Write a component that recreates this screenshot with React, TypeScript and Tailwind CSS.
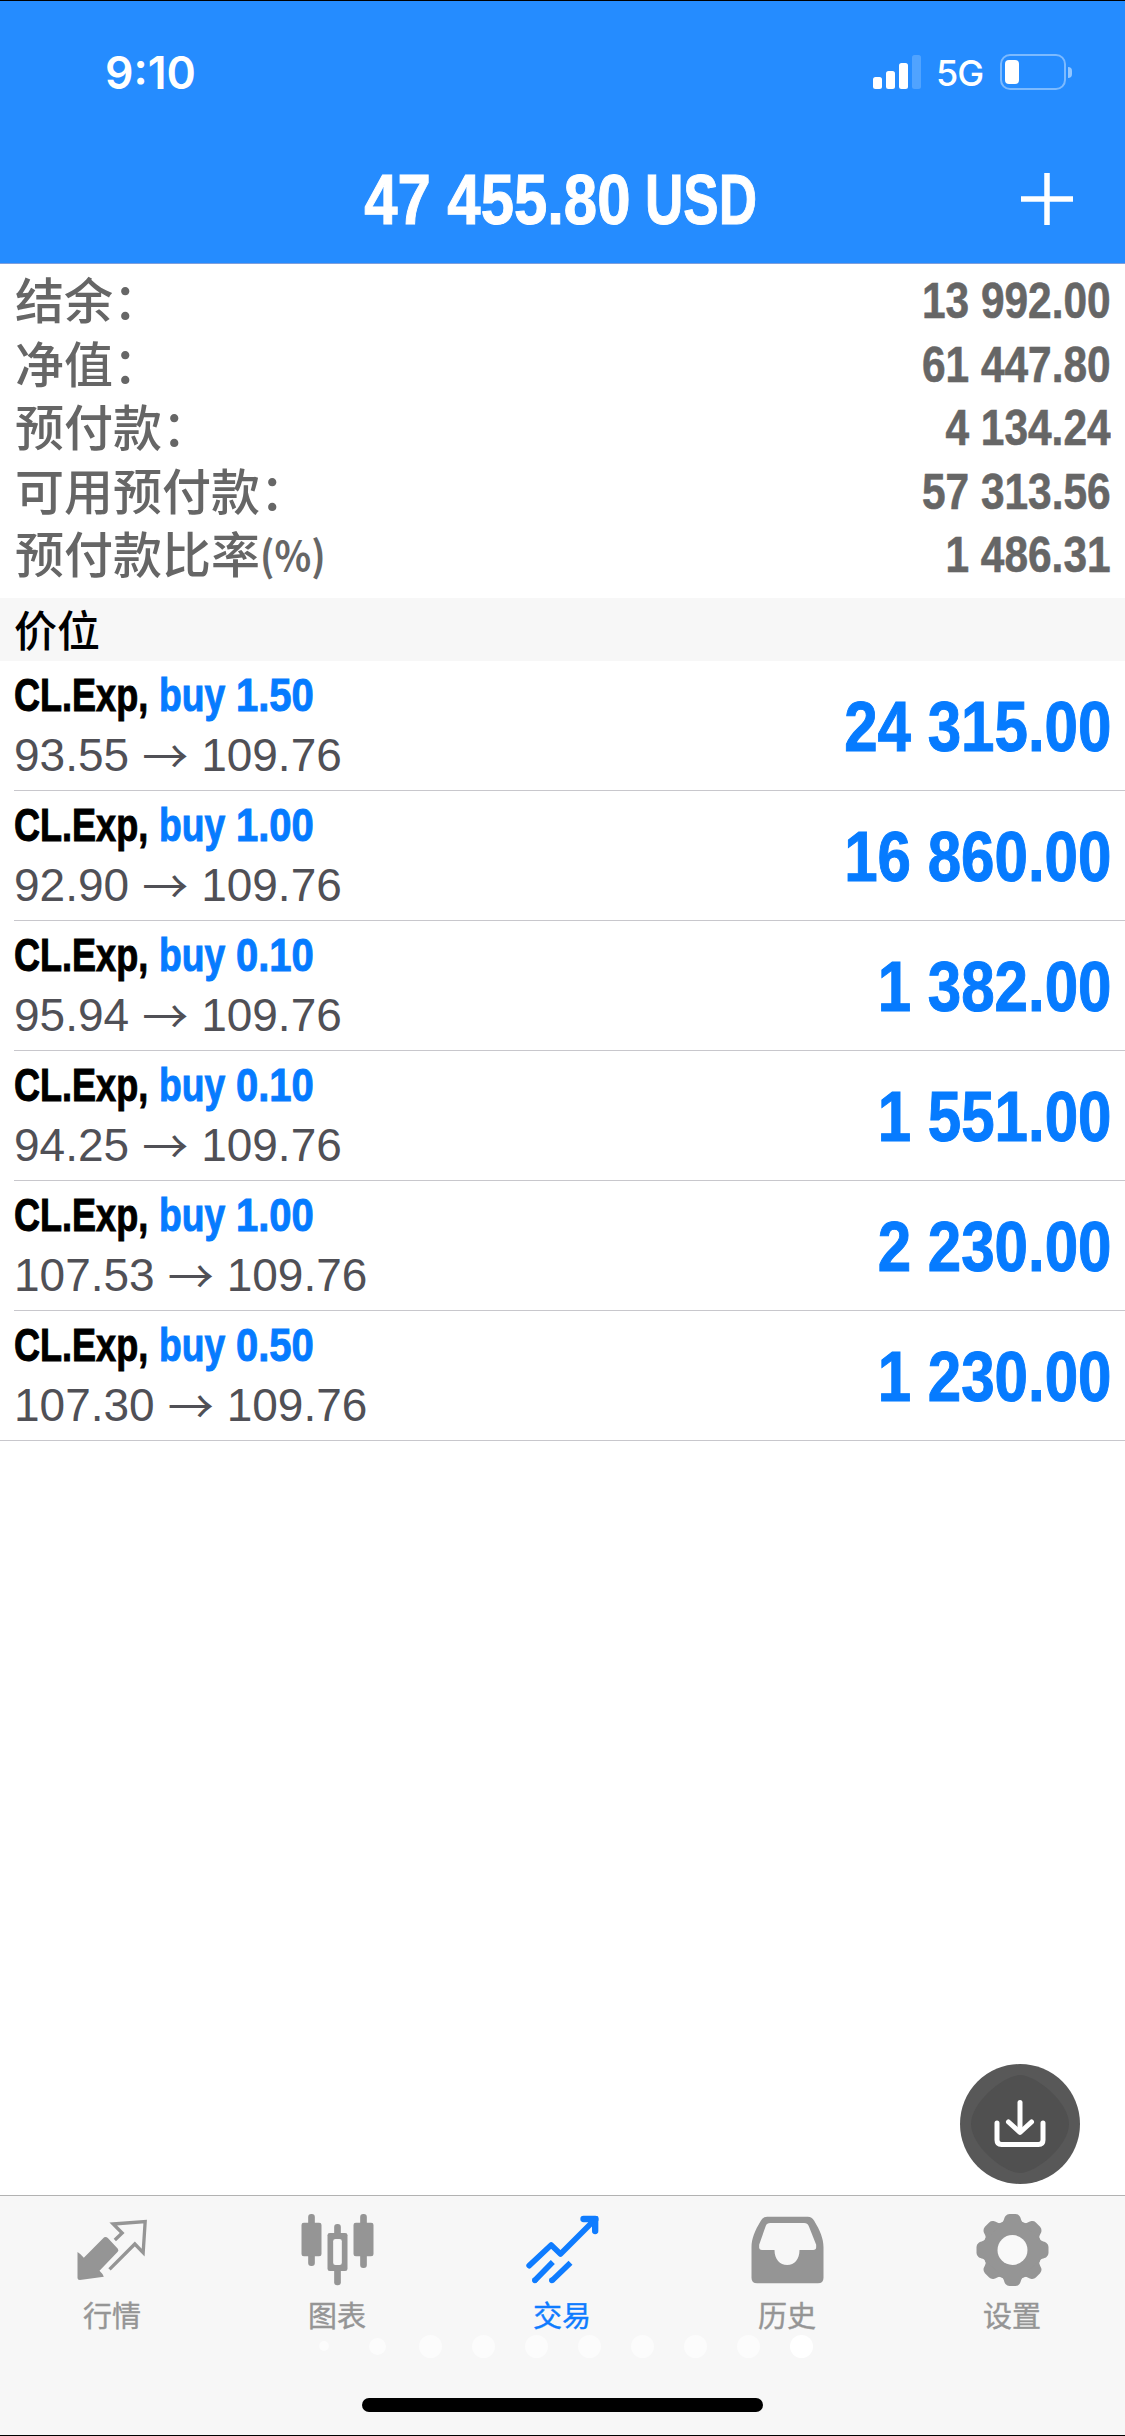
import type { ReactNode } from "react";

const CJK = "font-['Noto_Sans_CJK_SC',sans-serif]";
const SANS = "font-['Liberation_Sans',Arial,sans-serif]";
const UI = "font-['Inter',sans-serif]";

const summary = [
  { label: "结余：", value: "13 992.00" },
  { label: "净值：", value: "61 447.80" },
  { label: "预付款：", value: "4 134.24" },
  { label: "可用预付款：", value: "57 313.56" },
  { label: "预付款比率", suffix: "(%)", value: "1 486.31" },
];

const positions = [
  { volume: "1.50", open: "93.55", current: "109.76", profit: "24 315.00" },
  { volume: "1.00", open: "92.90", current: "109.76", profit: "16 860.00" },
  { volume: "0.10", open: "95.94", current: "109.76", profit: "1 382.00" },
  { volume: "0.10", open: "94.25", current: "109.76", profit: "1 551.00" },
  { volume: "1.00", open: "107.53", current: "109.76", profit: "2 230.00" },
  { volume: "0.50", open: "107.30", current: "109.76", profit: "1 230.00" },
];

function StatusBar() {
  return (
    <div className="flex h-[92px] items-end justify-between pr-[53px] pl-[105px] text-white">
      <span className={`${UI} -mb-[7px] text-[44.5px] leading-[54px] font-semibold`}>9:10</span>
      <div className="-mb-[1px] flex h-[44px] items-center">
        <div className="flex h-[34px] items-end gap-[4px]">
          <i className="h-[12px] w-[9px] rounded-[2.5px] bg-white" />
          <i className="h-[18px] w-[9px] rounded-[2.5px] bg-white" />
          <i className="h-[26px] w-[9px] rounded-[2.5px] bg-white" />
          <i className="h-[34px] w-[9px] rounded-[2.5px] bg-white/20" />
        </div>
        <span className={`${UI} ml-[15.5px] w-[64px] pt-[2px] text-[36px] leading-[44px] font-medium tracking-[-1px]`}>5G</span>
        <div className="flex h-[36px] w-[66px] items-center rounded-[10px] border-[2.5px] border-white/40 pl-[3px]">
          <i className="h-[24px] w-[14px] rounded-[4px] bg-white" />
        </div>
        <i className="ml-[2px] h-[11px] w-[4px] rounded-r-full bg-white/50" />
      </div>
    </div>
  );
}

function Header() {
  return (
    <header className="h-[264px] border-t border-b border-t-black border-b-[#7f9fdc] bg-[#258cff]">
      <StatusBar />
      <div className="grid h-[150px] grid-cols-[1fr_auto_1fr] items-center pt-[62px] pb-[2px]">
        <span />
        <h1
          className={`${SANS} flex gap-[15px] pt-[5px] pr-[13px] text-[70px] leading-[81px] font-bold whitespace-pre text-white [-webkit-text-stroke:1px]`}
        >
          <span className="origin-right scale-x-[0.855]">47 455.80</span>
          <span className="origin-left scale-x-[0.758]">USD</span>
        </h1>
        <svg className="mt-[2px] mr-[52px] size-[52px] justify-self-end" viewBox="0 0 52 52" stroke="#fff" strokeWidth="5.5">
          <path d="M26 0V52M0 26H52" />
        </svg>
      </div>
    </header>
  );
}

function Summary() {
  return (
    <section className="flex h-[334px] flex-col pt-[5px] pr-[14px] pl-[15px] text-[#666]">
      {summary.map((row) => (
        <div key={row.label} className="flex h-[63.5px] items-center justify-between">
          <span className={`${CJK} mb-[6px] flex items-center text-[49px] leading-[57px] font-medium whitespace-nowrap`}>
            {row.label}
            {row.suffix && <span className="origin-left scale-x-[0.93] pt-[3px] text-[41px] font-bold">{row.suffix}</span>}
          </span>
          <span
            className={`${SANS} origin-right scale-x-[0.84] text-[50.5px] leading-[63px] font-bold whitespace-pre [-webkit-text-stroke:0.6px]`}
          >
            {row.value}
          </span>
        </div>
      ))}
    </section>
  );
}

function PositionRow({ volume, open, current, profit, last }: (typeof positions)[number] & { last: boolean }) {
  return (
    <li className={last ? "border-b border-[#c8c7cc] pl-[14px]" : "ml-[14px] border-b border-[#c8c7cc]"}>
      <div className="flex h-[129px] items-center justify-between pr-[14px]">
        <div className="mb-[2px] flex flex-col">
          <div
            className={`${SANS} flex text-[46.5px] leading-[60px] font-bold whitespace-nowrap text-[#067bff] [-webkit-text-stroke:1px]`}
          >
            <span className="w-[144.5px] origin-left scale-x-[0.775] text-black">CL.Exp,</span>
            <span className="w-[77px] origin-left scale-x-[0.8]">buy</span>
            <span className="origin-left scale-x-[0.86]">{volume}</span>
          </div>
          <div className={`${SANS} flex items-center text-[46px] leading-[60px] text-[#505056]`}>
            <span>{open}</span>
            <span className={`${CJK} w-[72px] pb-[4px] text-center leading-[56px]`}>→</span>
            <span>{current}</span>
          </div>
        </div>
        <span
          className={`${SANS} origin-right scale-x-[0.858] pt-[2px] text-[70px] leading-[86px] font-bold whitespace-pre text-[#067bff] [-webkit-text-stroke:1px]`}
        >
          {profit}
        </span>
      </div>
    </li>
  );
}

const quotesIcon = (
  <>
    <path d="M231 216Q241 222 250 233L311 172Q317 169 322 174L352 206Q356 211 351 216L297 272Q306 280 310 290L238 300Q231 300 231 294Z" />
    <path d="M343 180L365 159L338 132L434 125L428 218L403 192L327 268" fill="none" stroke="currentColor" strokeWidth="10" />
  </>
);

const chartIcon = (
  <g>
    <rect x="923" y="102" width="20" height="156" rx="9" />
    <rect x="903" y="128" width="60" height="101" rx="7" />
    <rect x="1079" y="102" width="20" height="162" rx="9" />
    <rect x="1059" y="128" width="60" height="101" rx="7" />
    <rect x="1001" y="132" width="20" height="184" rx="9" />
    <rect x="981" y="159" width="60" height="114" rx="7" />
    <rect x="998" y="177" width="26" height="78" rx="7" fill="#f7f7f7" />
  </g>
);

const tradeIcon = (
  <g fill="none" stroke="currentColor" strokeWidth="17" strokeLinejoin="round">
    <path d="M236 257L302 195L330 222L432 120" strokeLinecap="round" />
    <path d="M252 302L307 246M304 302L360 248" />
    <path d="M253 301h.1M304 301h.1" strokeLinecap="round" />
    <path d="M399 117H434V153" strokeLinecap="round" strokeWidth="19" />
    <path d="M410 118H434V142Z" fill="currentColor" strokeWidth="8" />
    <path d="M430 108H439Q444 108 444 114V122H430Z" fill="currentColor" stroke="none" />
  </g>
);

const historyIcon = (
  <path
    fillRule="evenodd"
    d="M125 500H247Q259 500 266 512C284 542 294 565 294 592V683Q294 700 277 700H95Q78 700 78 683V592C78 565 88 542 106 512Q113 500 125 500ZM134 519Q124 519 121 527L101 584V594Q102 600 109 600H147C147 628 163 645 185 645C207 645 222 628 222 600H263Q272 600 272 592V584L250 529Q246 519 236 519Z"
  />
);

const settingsIcon = (
  <g transform="translate(861 600)">
    <circle r="89" />
    {[0, 45, 90, 135, 180, 225, 270, 315].map((angle) => (
      <path
        key={angle}
        transform={`rotate(${angle})`}
        d="M-38 -78C-24 -84 -27 -94 -21 -102Q-16 -108 -9 -108H9Q16 -108 21 -102C27 -94 24 -84 38 -78Z"
      />
    ))}
    <circle r="45" fill="#f9f9f9" />
  </g>
);

const tabs: { label: string; viewBox: string; icon: ReactNode; active?: boolean }[] = [
  { label: "行情", viewBox: "211.5 72 252 252", icon: quotesIcon },
  { label: "图表", viewBox: "886.5 72 252 252", icon: chartIcon },
  { label: "交易", viewBox: "211.5 72 252 252", icon: tradeIcon, active: true },
  { label: "历史", viewBox: "61.5 462 252 252", icon: historyIcon },
  { label: "设置", viewBox: "736.5 462 252 252", icon: settingsIcon },
];

const dots = ["size-[10px] bg-white/60", "size-[17px] bg-white/60"]
  .concat(Array(7).fill("size-[23px] bg-white/60"))
  .concat("size-[23px] bg-white");

function TabBar() {
  return (
    <footer className="flex h-[241px] flex-col border-t border-b border-t-[#b2b2b2] border-b-black bg-[#f7f7f7]">
      <nav className="grid h-[138px] grid-cols-5 pt-[8px]">
        {tabs.map((tab) => (
          <button
            key={tab.label}
            className={`flex flex-col items-center ${tab.active ? "text-[#0f7cff]" : "text-[#959595]"}`}
          >
            <svg className="size-[84px]" viewBox={tab.viewBox} fill="currentColor">
              {tab.icon}
            </svg>
            <span className={`${CJK} mt-[5px] mr-[1px] text-[29px] leading-[42px] [-webkit-text-stroke:0.4px]`}>{tab.label}</span>
          </button>
        ))}
      </nav>
      <div className="flex h-[24px] items-center justify-center gap-[30px]">
        {dots.map((dot, i) => (
          <span key={i} className="flex size-[23px] items-center justify-center">
            <i className={`rounded-full ${dot}`} />
          </span>
        ))}
      </div>
      <div className="mx-auto mt-[40px] h-[14px] w-[401px] rounded-full bg-black" />
    </footer>
  );
}

function ImportButton() {
  return (
    <button className="mr-[45px] mb-[11px] size-[120px] self-end rounded-full bg-[#585858]">
      <svg viewBox="0 0 120 120" fill="none" stroke="#fff" strokeWidth="5" strokeLinecap="round" strokeLinejoin="round">
        <path
          d="M60 11C76 11 109 38 109 60C109 82 76 109 60 109C44 109 11 82 11 60C11 38 44 11 60 11Z"
          fill="#505050"
          stroke="none"
        />
        <path d="M60 38.500V67" />
        <path d="M48.500 58L60 68.500L71.500 58" />
        <path d="M37 59V76Q37 80.500 41.500 80.500H78.500Q83 80.500 83 76V59" />
      </svg>
    </button>
  );
}

export default function App() {
  return (
    <div className="flex h-[2436px] w-[1125px] flex-col overflow-hidden bg-white">
      <Header />
      <Summary />
      <h2 className={`${CJK} h-[63px] bg-[#f7f7f7] pl-[14px] text-[43px] leading-[60px] font-medium text-black`}>价位</h2>
      <ul className="flex flex-col">
        {positions.map((position, i) => (
          <PositionRow key={i} {...position} last={i === positions.length - 1} />
        ))}
      </ul>
      <div className="flex-1" />
      <ImportButton />
      <TabBar />
    </div>
  );
}
